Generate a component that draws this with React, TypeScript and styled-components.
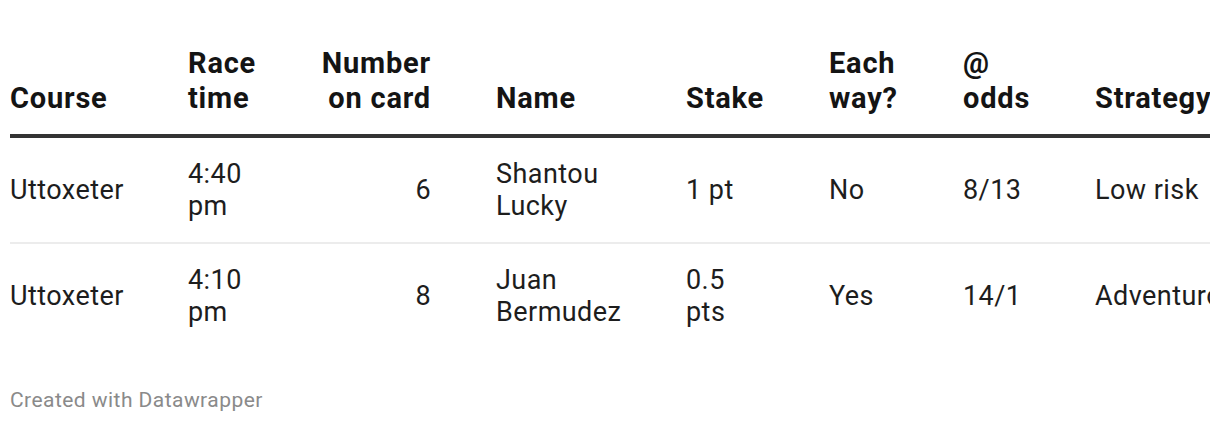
import styled, { createGlobalStyle } from 'styled-components'

const GlobalStyle = createGlobalStyle`
  html, body { margin: 0; padding: 0; background: #fff; overflow: hidden; }
  body { font-family: Roboto, "Noto Sans", Arial, sans-serif; color: #1d1d1d; }
`

interface Column {
  key: string
  label: string
  width: number
  padRight: number
  align?: 'left' | 'right'
}

const columns: Column[] = [
  { key: 'course',   label: 'Course',         width: 178, padRight: 24 },
  { key: 'time',     label: 'Race time',      width: 118, padRight: 30 },
  { key: 'number',   label: 'Number on card', width: 190, padRight: 65, align: 'right' },
  { key: 'name',     label: 'Name',           width: 190, padRight: 36 },
  { key: 'stake',    label: 'Stake',          width: 143, padRight: 70 },
  { key: 'eachway',  label: 'Each way?',      width: 134, padRight: 34 },
  { key: 'odds',     label: '@ odds',         width: 132, padRight: 52 },
  { key: 'strategy', label: 'Strategy',       width: 240, padRight: 10 },
]

const rows: Record<string, string>[] = [
  { course: 'Uttoxeter', time: '4:40 pm', number: '6', name: 'Shantou Lucky',
    stake: '1 pt', eachway: 'No', odds: '8/13', strategy: 'Low risk' },
  { course: 'Uttoxeter', time: '4:10 pm', number: '8', name: 'Juan Bermudez',
    stake: '0.5 pts', eachway: 'Yes', odds: '14/1', strategy: 'Adventurous' },
]

export default function App() {
  return (
    <>
      <GlobalStyle />
      <Wrap>
        <TableBox>
          <Table>
            <colgroup>
              {columns.map(c => <col key={c.key} style={{ width: c.width }} />)}
            </colgroup>
            <thead>
              <tr>
                {columns.map(c => (
                  <Th key={c.key} $align={c.align} $pad={c.padRight}>{c.label}</Th>
                ))}
              </tr>
            </thead>
            <tbody>
              {rows.map((r, i) => (
                <Tr key={i} $last={i === rows.length - 1}>
                  {columns.map(c => (
                    <Td key={c.key} $align={c.align} $pad={c.padRight}>{r[c.key]}</Td>
                  ))}
                </Tr>
              ))}
            </tbody>
          </Table>
        </TableBox>
        <Footer>Created with Datawrapper</Footer>
      </Wrap>
    </>
  )
}

const Wrap = styled.div`width: 1200px; padding: 46px 10px 0;`
const TableBox = styled.div`width: 1200px; overflow: hidden;`
const Table = styled.table`
  table-layout: fixed; border-collapse: collapse; border-spacing: 0;
  width: 1325px;
`
const Th = styled.th<{ $align?: string; $pad: number }>`
  text-align: ${({ $align }) => $align || 'left'};
  vertical-align: bottom;
  font-weight: 700; font-size: 29px; line-height: 35px; letter-spacing: 0.8px;
  color: #141414;
  padding: 0 ${({ $pad }) => $pad}px 18px 0;
  border-bottom: 4px solid #333;
`
const Tr = styled.tr<{ $last: boolean }>`
  border-bottom: ${({ $last }) => ($last ? 'none' : '2px solid #ececec')};
`
const Td = styled.td<{ $align?: string; $pad: number }>`
  text-align: ${({ $align }) => $align || 'left'};
  vertical-align: middle;
  font-size: 27px; line-height: 32px; letter-spacing: 0.45px; color: #1d1d1d;
  padding: 20px ${({ $pad }) => $pad}px 20px 0;
`
const Footer = styled.div`
  margin-top: 40px;
  font-size: 21px; line-height: 24px; letter-spacing: 0.45px; color: #8a8a8a;
`
